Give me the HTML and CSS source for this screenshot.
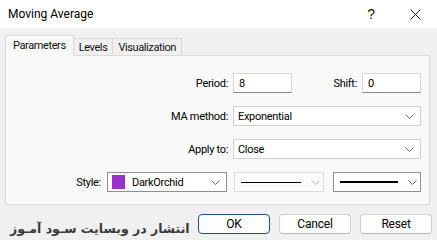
FILE: index.html
```html
<!DOCTYPE html>
<html lang="en">
<head>
<meta charset="utf-8">
<title>Moving Average</title>
<link rel="stylesheet" href="styles.css">
</head>
<body>
<div class="dialog">
  <div class="titlebar">
    <span class="title">Moving Average</span>
    <span class="help">?</span>
    <svg class="close" width="11" height="11" viewBox="0 0 11 11"><path d="M0.5 0.5 L10.5 10.5 M10.5 0.5 L0.5 10.5" stroke="#1a1a1a" stroke-width="1" fill="none"/></svg>
  </div>
  <div class="body">
    <div class="tabs">
      <div class="tab active">Parameters</div>
      <div class="tab">Levels</div>
      <div class="tab">Visualization</div>
    </div>
    <div class="panel">
      <div class="row">
        <label class="lbl">Period:</label>
        <div class="field split">
          <div class="input">8</div>
          <label class="lbl shift">Shift:</label>
          <div class="input">0</div>
        </div>
      </div>
      <div class="row">
        <label class="lbl">MA method:</label>
        <div class="field select">
          <span class="val">Exponential</span>
          <svg class="chev" width="9" height="5" viewBox="0 0 9 5"><polyline points="0.5,0.5 4.5,4.5 8.5,0.5" fill="none" stroke="#6b6b6b" stroke-width="1"/></svg>
        </div>
      </div>
      <div class="row">
        <label class="lbl">Apply to:</label>
        <div class="field select">
          <span class="val">Close</span>
          <svg class="chev" width="9" height="5" viewBox="0 0 9 5"><polyline points="0.5,0.5 4.5,4.5 8.5,0.5" fill="none" stroke="#6b6b6b" stroke-width="1"/></svg>
        </div>
      </div>
      <div class="row style-row">
        <label class="lbl">Style:</label>
        <div class="select color-sel">
          <span class="swatch"></span>
          <span class="val">DarkOrchid</span>
          <svg class="chev" width="9" height="5" viewBox="0 0 9 5"><polyline points="0.5,0.5 4.5,4.5 8.5,0.5" fill="none" stroke="#6b6b6b" stroke-width="1"/></svg>
        </div>
        <div class="select line-sel disabled">
          <span class="line thin"></span>
          <svg class="chev" width="9" height="5" viewBox="0 0 9 5"><polyline points="0.5,0.5 4.5,4.5 8.5,0.5" fill="none" stroke="#c4c4c4" stroke-width="1"/></svg>
        </div>
        <div class="select line-sel dark">
          <span class="line thick"></span>
          <svg class="chev" width="9" height="5" viewBox="0 0 9 5"><polyline points="0.5,0.5 4.5,4.5 8.5,0.5" fill="none" stroke="#6b6b6b" stroke-width="1"/></svg>
        </div>
      </div>
    </div>
    <div class="footer">
      <span class="brand" dir="rtl">انتشار در وبسایت سـود آمـوز</span>
      <div class="buttons">
        <button class="btn primary">OK</button>
        <button class="btn">Cancel</button>
        <button class="btn">Reset</button>
      </div>
    </div>
  </div>
</div>
</body>
</html>
```
FILE: styles.css
```css
* { box-sizing: border-box; }
html, body {
  margin: 0;
  padding: 0;
  width: 437px;
  height: 240px;
  overflow: hidden;
  background: #f0f0f0;
  font-family: Roboto, "Liberation Sans", sans-serif;
  font-size: 11px;
  letter-spacing: -0.3px;
  color: #000;
}
.dialog { width: 437px; height: 240px; display: flex; flex-direction: column; }
.titlebar {
  flex: none;
  height: 28px;
  background: #ffffff;
  display: flex;
  align-items: center;
  padding-left: 8px;
}
.title { font-size: 12px; letter-spacing: 0; flex: 1; padding-bottom: 1px; }
.help {
  font-family: "Liberation Sans", sans-serif;
  font-size: 14px;
  letter-spacing: 0;
  color: #1a1a1a;
  margin-right: 35px;
}
.close { margin-right: 16px; }
.body { flex: none; padding: 7px 6px 0 5px; display: flex; flex-direction: column; }
.tabs { flex: none; display: flex; align-items: flex-end; height: 20px; position: relative; z-index: 1; }
.tab {
  height: 17px;
  padding: 0 5px;
  border: 1px solid #d9d9d9;
  border-bottom: none;
  background: #f0f0f0;
  font-size: 11px;
  letter-spacing: -0.4px;
  display: flex;
  align-items: center;
  margin-left: -1px;
  color: #111;
}
.tab.active {
  height: 21px;
  margin-left: 0;
  margin-bottom: -1px;
  background: #f9f9f9;
  padding: 0 7px 2px 7px;
}
.panel {
  flex: none;
  height: 150px;
  width: 425px;
  background: #f9f9f9;
  border: 1px solid #d9d9d9;
  padding: 17px 8px 0 0;
  display: flex;
  flex-direction: column;
  gap: 13px;
}
.row {
  display: grid;
  grid-template-columns: 1fr 188px;
  column-gap: 5px;
  height: 20px;
  align-items: center;
}
.lbl { text-align: right; }
.field { height: 20px; }
.split { display: flex; align-items: center; }
.input {
  width: 59px;
  height: 20px;
  background: #fff;
  border: 1px solid #d6d6d6;
  border-bottom-color: #8a8a8a;
  padding: 1px 0 0 5px;
  display: flex;
  align-items: center;
}
.shift { flex: 1; margin-right: 5px; }
.select {
  height: 20px;
  background: #fff;
  border: 1px solid #d0d0d0;
  display: flex;
  align-items: center;
  padding: 0 6px 0 4px;
}
.val { flex: 1; }
.chev { flex: none; }
.style-row {
  display: flex;
  justify-content: flex-end;
  column-gap: 0;
}
.style-row .lbl { margin-right: 6px; }
.color-sel { width: 120px; margin-right: 7px; border-color: #8f8f8f; padding-left: 4px; }
.swatch { flex: none; width: 13px; height: 14px; background: #9932cc; margin-right: 7px; }
.line-sel { padding: 0 4px 0 6px; }
.line-sel.disabled { width: 90px; background: #fbfbfb; border-color: #dcdcdc; margin-right: 9px; }
.line-sel.dark { width: 88px; border-color: #8f8f8f; }
.line { flex: none; display: block; background: #000; }
.line.thin { width: 60px; height: 1px; margin-right: 10px; }
.line.thick { width: 58px; height: 2px; margin-right: 10px; }
.footer {
  flex: none;
  display: flex;
  align-items: center;
  justify-content: space-between;
  height: 20px;
  margin-top: 9px;
}
.brand {
  font-family: "DejaVu Sans", sans-serif;
  font-weight: bold;
  font-size: 12.5px;
  letter-spacing: 0;
  white-space: nowrap;
  color: #3a3a3a;
  padding-left: 5px;
  margin-top: 8px;
}
.buttons { display: flex; gap: 9px; margin-right: -1px; }
.btn {
  width: 72px;
  height: 20px;
  font-family: Roboto, "Liberation Sans", sans-serif;
  font-size: 12px;
  letter-spacing: -0.2px;
  background: #fdfdfd;
  border: 1px solid #d0d0d0;
  border-bottom-color: #b8b8b8;
  border-radius: 4px;
  padding: 0;
  color: #000;
}
.btn.primary { border: 1px solid #1f4f86; }
```
